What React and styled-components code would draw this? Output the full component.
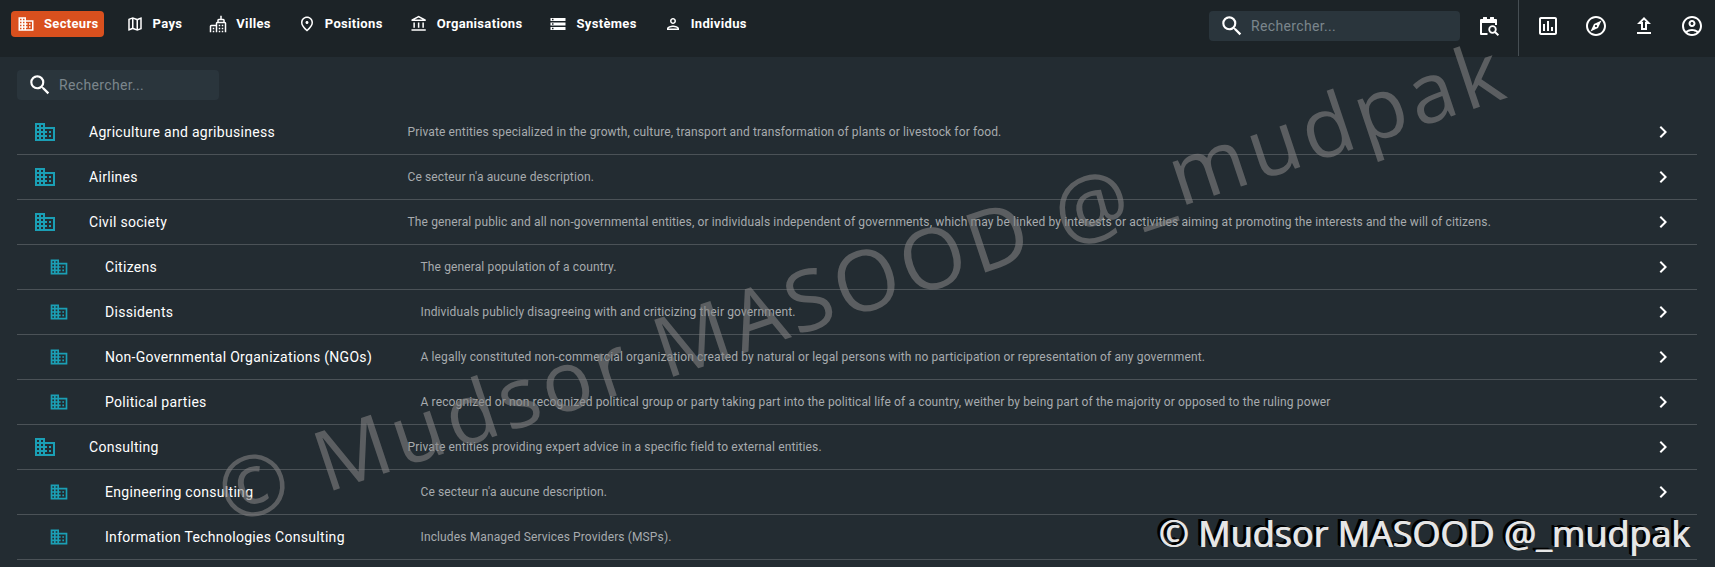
import React from 'react';
import styled, { createGlobalStyle } from 'styled-components';
import {
  MdDomain,
  MdOutlineMap,
  MdOutlinePlace,
  MdOutlineAccountBalance,
  MdStorage,
  MdOutlinePerson,
  MdSearch,
  MdOutlineAssessment,
  MdOutlineExplore,
  MdOutlineAccountCircle,
  MdChevronRight,
} from 'react-icons/md';

const GlobalStyle = createGlobalStyle`
  html, body {
    margin: 0;
    padding: 0;
    background: #232c32;
  }
  body {
    font-family: Roboto, "Liberation Sans", sans-serif;
    color: #fff;
  }
`;

const CityIcon = () => (
  <svg width="20" height="20" viewBox="0 0 24 24" fill="currentColor">
    <path d="M15,23H13V21H15V23M19,21H17V23H19V21M15,17H13V19H15V17M7,21H5V23H7V21M7,17H5V19H7V17M19,17H17V19H19V17M15,13H13V15H15V13M19,13H17V15H19V13M21,9A2,2 0 0,1 23,11V23H21V11H11V23H9V15H3V23H1V15A2,2 0 0,1 3,13H9V11A2,2 0 0,1 11,9V7A2,2 0 0,1 13,5H15V1H17V5H19A2,2 0 0,1 21,7V9M19,9V7H13V9H19Z" />
  </svg>
);

const CalendarSearchIcon = () => (
  <svg width="24" height="24" viewBox="0 0 24 24" fill="currentColor">
    <path d="M3 6a1 1 0 0 1 1-1h2V3.5a.5.5 0 0 1 .5-.5h3a.5.5 0 0 1 .5.5V5h3V3.5a.5.5 0 0 1 .5-.5h3a.5.5 0 0 1 .5.5V5h2a1 1 0 0 1 1 1v5h-2V9H5v10h5.5v2H4a1 1 0 0 1-1-1z" />
    <circle cx="15.5" cy="15.5" r="3.3" fill="none" stroke="currentColor" strokeWidth="1.8" />
    <path d="M18 18l3.4 3.2" fill="none" stroke="currentColor" strokeWidth="1.9" />
  </svg>
);

const UploadIcon = () => (
  <svg width="24" height="24" viewBox="0 0 24 24" fill="currentColor">
    <path d="M9 16h6v-6h4l-7-7-7 7h4v6zm3-10.17L14.17 8H13v6h-2V8H9.83L12 5.83zM5 18h14v2H5z" />
  </svg>
);

const navItems = [
  { label: 'Secteurs', icon: <MdDomain size={20} />, active: true },
  { label: 'Pays', icon: <MdOutlineMap size={20} /> },
  { label: 'Villes', icon: <CityIcon /> },
  { label: 'Positions', icon: <MdOutlinePlace size={20} /> },
  { label: 'Organisations', icon: <MdOutlineAccountBalance size={20} /> },
  { label: 'Systèmes', icon: <MdStorage size={20} /> },
  { label: 'Individus', icon: <MdOutlinePerson size={20} /> },
];

const sectors = [
  { name: 'Agriculture and agribusiness', description: 'Private entities specialized in the growth, culture, transport and transformation of plants or livestock for food.' },
  { name: 'Airlines', description: "Ce secteur n'a aucune description." },
  { name: 'Civil society', description: 'The general public and all non-governmental entities, or individuals independent of governments, which may be linked by interests or activities aiming at promoting the interests and the will of citizens.' },
  { name: 'Citizens', sub: true, description: 'The general population of a country.' },
  { name: 'Dissidents', sub: true, description: 'Individuals publicly disagreeing with and criticizing their government.' },
  { name: 'Non-Governmental Organizations (NGOs)', sub: true, description: 'A legally constituted non-commercial organization created by natural or legal persons with no participation or representation of any government.' },
  { name: 'Political parties', sub: true, description: 'A recognized or non recognized political group or party taking part into the political life of a country, weither by being part of the majority or opposed to the ruling power' },
  { name: 'Consulting', description: 'Private entities providing expert advice in a specific field to external entities.' },
  { name: 'Engineering consulting', sub: true, description: "Ce secteur n'a aucune description." },
  { name: 'Information Technologies Consulting', sub: true, description: 'Includes Managed Services Providers (MSPs).' },
];

const App = () => {
  return (
    <Page>
      <GlobalStyle />
      <TopBar>
        <NavGroup>
          {navItems.map((item) => (
            <NavItem key={item.label} $active={item.active}>
              <NavIcon>{item.icon}</NavIcon>
              <NavLabel>{item.label}</NavLabel>
            </NavItem>
          ))}
        </NavGroup>
        <TopRight>
          <SearchBox $width={251}>
            <MdSearch size={26} />
            <SearchInput placeholder="Rechercher..." />
          </SearchBox>
          <CalendarButton>
            <CalendarSearchIcon />
          </CalendarButton>
          <Divider />
          <ActionButton><MdOutlineAssessment size={24} /></ActionButton>
          <ActionButton><MdOutlineExplore size={24} /></ActionButton>
          <ActionButton><UploadIcon /></ActionButton>
          <ActionButton><MdOutlineAccountCircle size={24} /></ActionButton>
        </TopRight>
      </TopBar>
      <Content>
        <SearchBox $width={202}>
          <MdSearch size={26} />
          <SearchInput placeholder="Rechercher..." />
        </SearchBox>
        <List>
          {sectors.map((sector) => (
            <Row key={sector.name} $sub={sector.sub}>
              <RowIcon $sub={sector.sub}>
                <MdDomain size={sector.sub ? 20 : 24} />
              </RowIcon>
              <RowName $sub={sector.sub}>{sector.name}</RowName>
              <RowDescription>{sector.description}</RowDescription>
              <RowChevron>
                <MdChevronRight size={24} />
              </RowChevron>
            </Row>
          ))}
        </List>
      </Content>
      <Watermark>© Mudsor MASOOD @_mudpak</Watermark>
      <Credit>© Mudsor MASOOD @_mudpak</Credit>
    </Page>
  );
};

const Page = styled.div`
  position: relative;
  width: 1715px;
  height: 567px;
  overflow: hidden;
  background: #232c32;
`;

const TopBar = styled.header`
  display: flex;
  justify-content: space-between;
  align-items: flex-start;
  height: 57px;
  box-sizing: border-box;
  padding-left: 11px;
  background: #1c2327;
`;

const NavGroup = styled.nav`
  display: flex;
  gap: 16px;
  padding-top: 11px;
`;

const NavItem = styled.div`
  display: flex;
  align-items: center;
  gap: 9px;
  height: 26px;
  padding: 0 5px 0 6px;
  border-radius: 4px;
  font-size: 13px;
  font-weight: 700;
  letter-spacing: 0.33px;
  color: #fff;
  background: ${(props) => (props.$active ? '#d9501e' : 'transparent')};
`;

const NavIcon = styled.span`
  display: flex;
  align-items: center;
  justify-content: center;
  width: 18px;
  height: 18px;
`;

const NavLabel = styled.span`
  margin-top: -2px;
`;

const TopRight = styled.div`
  display: flex;
  align-items: center;
  height: 56px;
  box-sizing: border-box;
  margin-right: -1px;
  padding-bottom: 4px;
`;

const SearchBox = styled.div`
  display: flex;
  align-items: center;
  gap: 6px;
  width: ${(props) => props.$width}px;
  height: 30px;
  box-sizing: border-box;
  padding-left: 10px;
  border-radius: 4px;
  background: #2a353c;
  color: #fff;
`;

const SearchInput = styled.input`
  flex: 1;
  min-width: 0;
  border: 0;
  outline: 0;
  padding: 0;
  background: transparent;
  font-family: Roboto, "Liberation Sans", sans-serif;
  font-size: 14px;
  letter-spacing: 0.35px;
  color: #fff;

  &::placeholder {
    color: #7b868c;
    opacity: 1;
  }
`;

const CalendarButton = styled.div`
  display: flex;
  align-items: center;
  justify-content: center;
  width: 58px;
  height: 52px;
`;

const Divider = styled.div`
  align-self: flex-start;
  width: 1px;
  height: 56px;
  margin-right: 5px;
  background: #464e53;
`;

const ActionButton = styled.div`
  display: flex;
  align-items: center;
  justify-content: center;
  width: 48px;
  height: 52px;
`;

const Content = styled.main`
  padding: 13px 18px 0 17px;
`;

const List = styled.div`
  margin-top: 10px;
`;

const Row = styled.div`
  display: flex;
  align-items: center;
  height: 45px;
  box-sizing: border-box;
  padding-left: ${(props) => (props.$sub ? 32 : 16)}px;
  padding-right: 22px;
  border-bottom: 1px solid #4b5257;
`;

const RowIcon = styled.div`
  display: flex;
  align-items: center;
  flex: 0 0 56px;
  color: #1b9fb5;
`;

const RowName = styled.div`
  flex: 0 0 ${(props) => (props.$sub ? 315.5 : 318.5)}px;
  font-size: 14px;
  letter-spacing: 0.3px;
  color: #fff;
  white-space: nowrap;
`;

const RowDescription = styled.div`
  flex: 1;
  font-size: 12px;
  letter-spacing: 0.13px;
  color: #a7abae;
  white-space: nowrap;
`;

const RowChevron = styled.div`
  display: flex;
  color: #fff;
`;

const Watermark = styled.div`
  position: absolute;
  left: 185px;
  top: 238px;
  font-family: "Open Sans", sans-serif;
  font-size: 84px;
  line-height: 1;
  letter-spacing: 4.7px;
  color: rgba(128, 128, 128, 0.6);
  white-space: nowrap;
  transform: rotate(-18.5deg);
  pointer-events: none;
`;

const Credit = styled.div`
  position: absolute;
  right: 25px;
  top: 513px;
  font-family: "Open Sans", sans-serif;
  font-size: 36px;
  line-height: 42px;
  color: #e6e6e6;
  white-space: nowrap;
  text-shadow: 1px 0 0 #e6e6e6, -1px -1px 0 #000, -2px -1px 0 #000, -3px -2px 0 #000;
  pointer-events: none;
`;

export default App;
